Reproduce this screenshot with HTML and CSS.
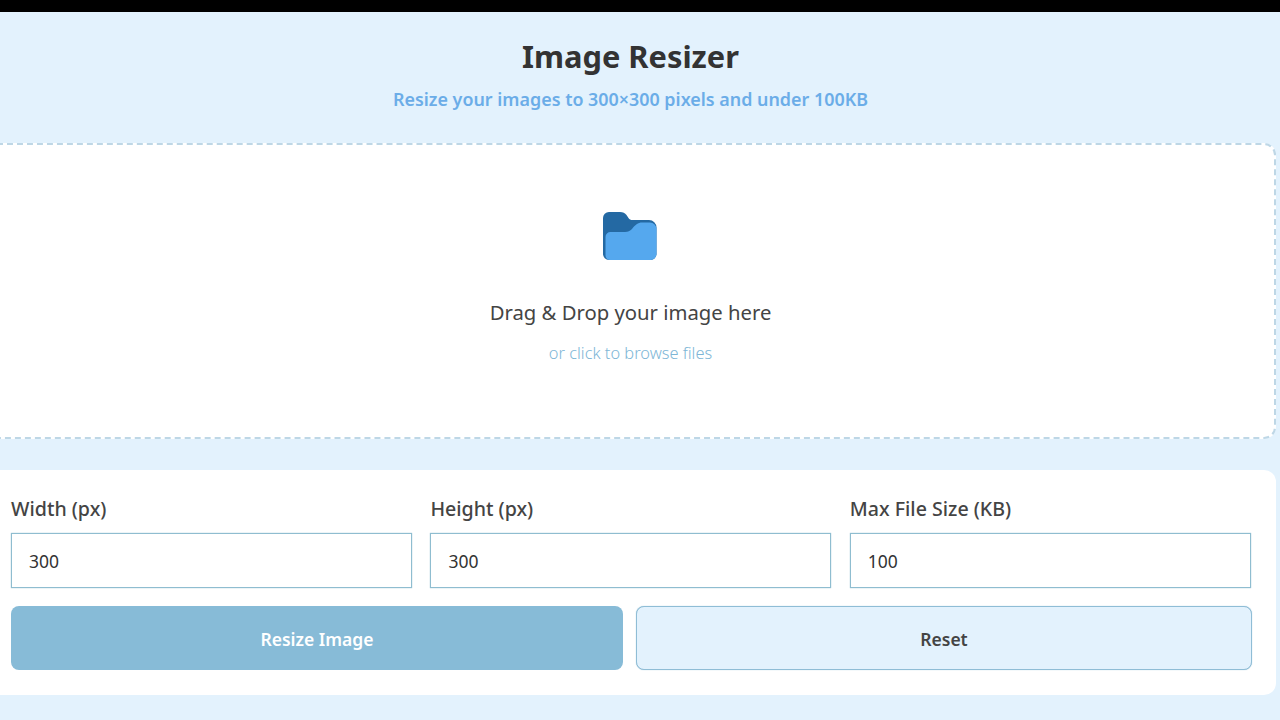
FILE: index.html
```html
<!DOCTYPE html>
<html lang="en">
<head>
<meta charset="utf-8">
<title>Image Resizer</title>
<link rel="stylesheet" href="styles.css">
</head>
<body>
<div class="topbar"></div>
<main class="app">
  <header class="header">
    <h1 class="title">Image Resizer</h1>
    <p class="subtitle">Resize your images to 300×300 pixels and under 100KB</p>
  </header>
  <section class="drop">
    <svg class="folder" width="54" height="48" viewBox="0 0 54 48" aria-hidden="true">
      <path class="folder-back" d="M0 6a6 6 0 0 1 6-6h11c3 0 5 1 6.500 3l2 3c1 1.500 2 2 4 2H46a7.500 7.500 0 0 1 7.500 7.500V42a6 6 0 0 1-6 6H6a6 6 0 0 1-6-6z"/>
      <path class="folder-front" d="M2.500 25a5 5 0 0 1 5-5H22c3 0 5-1 7-3 3-4 6-6.500 10-6.500h8a6.500 6.500 0 0 1 6.500 6.500v25a6 6 0 0 1-6 6H7a4.500 4.500 0 0 1-4.500-4.500z"/>
    </svg>
    <p class="drop-title">Drag &amp; Drop your image here</p>
    <p class="drop-hint">or click to browse files</p>
  </section>
  <section class="panel">
    <div class="fields">
      <label class="field"><span class="field-label">Width (px)</span><input class="input" type="text" value="300"></label>
      <label class="field"><span class="field-label">Height (px)</span><input class="input" type="text" value="300"></label>
      <label class="field"><span class="field-label">Max File Size (KB)</span><input class="input" type="text" value="100"></label>
    </div>
    <div class="actions">
      <button class="btn btn-primary" type="button">Resize Image</button>
      <button class="btn btn-secondary" type="button">Reset</button>
    </div>
  </section>
</main>
</body>
</html>
```
FILE: styles.css
```css
* { box-sizing: border-box; }
html, body { margin: 0; height: 100%; overflow: hidden; }
body {
  background: #e3f2fd;
  font-family: "Noto Sans", "Open Sans", sans-serif;
  color: #333;
}
.topbar { height: 12px; background: #000; }
.app { width: 1291px; margin-left: -15px; }
.header { height: 131px; text-align: center; padding-top: 22px; }
.title { margin: 0; font-size: 30.800px; line-height: 44px; font-weight: 700; color: #333; }
.subtitle { margin: 9px 0 0; font-size: 17.900px; line-height: 24px; font-weight: 600; color: #6bade8; }
.drop {
  height: 296px;
  background: #fff;
  border: 2px dashed #bed7e6;
  border-radius: 12px;
  display: flex;
  flex-direction: column;
  align-items: center;
  padding-top: 67px;
}
.folder { display: block; margin-left: -2px; }
.folder-back { fill: #2469a3; }
.folder-front { fill: #55a8ee; }
.drop-title { margin: 39px 0 0; font-size: 20.300px; line-height: 26px; color: #444; }
.drop-hint { margin: 16px 0 0; font-size: 16.400px; line-height: 24px; font-weight: 300; color: #7db6d6; }
.panel {
  margin-top: 31px;
  height: 225px;
  background: #fff;
  border-radius: 12px;
  padding: 26px 25px 0 26px;
}
.fields { display: grid; grid-template-columns: repeat(3, 401px); column-gap: 18.400px; }
.field { display: block; }
.field-label { display: block; font-size: 19.600px; line-height: 26px; font-weight: 500; color: #444; margin-bottom: 11px; }
.input {
  display: block;
  width: 100%;
  height: 55px;
  border: 1px solid #8fbdd0;
  box-shadow: 0 0 1px #8fbdd0;
  background: #fff;
  padding: 0 17px;
  font: 400 17.500px "Noto Sans", "Open Sans", sans-serif;
  color: #333;
  outline: none;
}
.actions { display: grid; grid-template-columns: 612px 616px; column-gap: 13px; margin-top: 18px; }
.btn {
  height: 64px;
  padding: 2px 0 0;
  border-radius: 8px;
  font: 600 17.500px "Noto Sans", "Open Sans", sans-serif;
}
.btn-primary { background: #87bbd7; border: 0; color: #fff; }
.btn-secondary { background: #e3f2fd; border: 1px solid #8fbdd6; box-shadow: 0 0 1px #8fbdd6; color: #444; }
```
